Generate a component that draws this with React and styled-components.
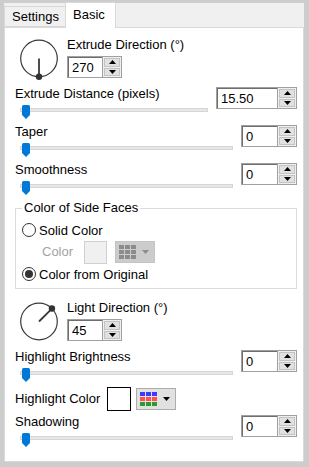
import React from 'react'
import styled, { createGlobalStyle } from 'styled-components'

const GlobalStyle = createGlobalStyle`
  html, body {
    margin: 0;
    padding: 0;
    background: #cdcdcd;
  }
`

const Window = styled.div`
  width: 309px;
  height: 467px;
  box-sizing: border-box;
  padding: 3px 5px 5px 4px;
  background: #cdcdcd;
  display: flex;
  flex-direction: column;
  font-family: "Liberation Sans", Arial, sans-serif;
  font-size: 13px;
  color: #000;
`

const TabStrip = styled.div`
  height: 24px;
  flex: none;
  background: #f0f0f0;
  display: flex;
  align-items: flex-end;
`

const Tab = styled.div`
  box-sizing: border-box;
  width: ${p => p.$w}px;
  height: ${p => (p.$active ? 26 : 21)}px;
  padding-left: ${p => p.$pl}px;
  margin-left: ${p => (p.$active ? -1 : 0)}px;
  margin-bottom: ${p => (p.$active ? -1 : 0)}px;
  position: relative;
  z-index: ${p => (p.$active ? 1 : 0)};
  background: ${p => (p.$active ? '#fff' : '#f0f0f0')};
  border: 1px solid #d9d9d9;
  border-bottom: ${p => (p.$active ? 'none' : '1px solid #d9d9d9')};
  display: flex;
  align-items: center;
  padding-bottom: ${p => (p.$active ? 3 : 0)}px;
`

const Panel = styled.div`
  flex: 1;
  background: #fff;
  border: 1px solid #d9d9d9;
  padding: 9px 6px 0 10px;
  display: flex;
  flex-direction: column;
`

const DirRow = styled.div`
  display: flex;
  align-items: flex-start;
  gap: 8px;
  margin-top: ${p => p.$mt || 0}px;
`

const DialSvg = styled.svg`
  margin: 2px 0 0 4px;
  overflow: visible;
  flex: none;
`

const DirCol = styled.div`
  display: flex;
  flex-direction: column;
  gap: 3px;
`

const Label = styled.div`
  line-height: 16px;
  white-space: nowrap;
  color: ${p => (p.$disabled ? '#a3a3a3' : '#000')};
`

const Group = styled.div`
  display: grid;
  grid-template-columns: 1fr auto;
  column-gap: 8px;
  margin-top: ${p => p.$mt}px;
`

const GroupSpin = styled.div`
  grid-column: 2;
  grid-row: 1 / span 2;
  margin-top: 1px;
`

const SliderRow = styled.div`
  grid-column: 1;
  position: relative;
  height: 14px;
  margin: 3px 0 0 5px;
`

const Track = styled.div`
  position: absolute;
  left: 0;
  right: 0;
  top: 3px;
  height: 4px;
  box-sizing: border-box;
  background: #e7e7e7;
  border: 1px solid #d6d6d6;
`

const Thumb = styled.svg`
  position: absolute;
  left: 2px;
  top: 0;
`

const SpinWrap = styled.div`
  display: flex;
  width: ${p => p.$w}px;
  height: 22px;
  box-sizing: border-box;
  border: 1px solid #a0a0a0;
  background: #fff;
`

const SpinInput = styled.input`
  flex: 1;
  min-width: 0;
  box-sizing: border-box;
  margin: 0;
  border: none;
  border-top: 1px solid #6e6e6e;
  border-left: 1px solid #6e6e6e;
  padding: 0 0 0 3px;
  font-family: "Liberation Sans", Arial, sans-serif;
  font-size: 13px;
  color: #000;
  background: #fff;
  outline: none;
`

const SpinButtons = styled.div`
  width: 19px;
  display: flex;
  flex-direction: column;
  gap: 1px;
  padding: 1px;
  box-sizing: border-box;
  background: #f0f0f0;
  border-left: 1px solid #a0a0a0;
`

const SpinArrow = styled.div`
  flex: 1;
  background: #e1e1e1;
  border: 1px solid #c3c3c3;
  display: flex;
  align-items: center;
  justify-content: center;
`

const Fieldset = styled.fieldset`
  margin: 5px 0 0 0;
  padding: 3px 0 3px 6px;
  border: 1px solid #dcdcdc;
  min-width: 0;
`

const Legend = styled.legend`
  padding: 0 2px;
  line-height: 16px;
`

const OptionRow = styled.div`
  height: 22px;
  display: flex;
  align-items: center;
  gap: ${p => p.$gap || 3}px;
  padding-left: ${p => p.$pl || 0}px;
`

const Radio = styled.span`
  width: 14px;
  height: 14px;
  box-sizing: border-box;
  border-radius: 50%;
  border: 1px solid #333;
  background: #fff;
  display: flex;
  align-items: center;
  justify-content: center;
  &::after {
    content: '';
    display: ${p => (p.$checked ? 'block' : 'none')};
    width: 8px;
    height: 8px;
    border-radius: 50%;
    background: #333;
  }
`

const Swatch = styled.div`
  width: ${p => p.$size}px;
  height: ${p => p.$size}px;
  box-sizing: border-box;
  border: 1px solid ${p => (p.$disabled ? '#cfcfcf' : '#000')};
  background: ${p => (p.$disabled ? '#f0f0f0' : '#fff')};
  margin-left: ${p => p.$ml}px;
`

const PaletteButton = styled.div`
  width: 40px;
  height: 22px;
  box-sizing: border-box;
  margin-left: 5px;
  background: ${p => (p.$disabled ? '#cccccc' : '#e1e1e1')};
  border: 1px solid ${p => (p.$disabled ? '#c4c4c4' : '#adadad')};
  display: flex;
  align-items: center;
  padding-left: 3px;
  gap: 6px;
`

const ColorRow = styled.div`
  height: 24px;
  display: flex;
  align-items: center;
  margin-top: ${p => p.$mt}px;
`

const Dial = ({ angle }) => {
  const rad = (angle * Math.PI) / 180
  const cx = 20
  const cy = 19.5
  const r = 18.3
  const x = cx + r * Math.cos(rad)
  const y = cy - r * Math.sin(rad)
  return (
    <DialSvg width="40" height="39" viewBox="0 0 40 39">
      <circle cx={cx} cy={cy} r={r} fill="none" stroke="#3a3a3a" strokeWidth="1.2" />
      <line x1={cx} y1={cy} x2={x} y2={y} stroke="#3a3a3a" strokeWidth="1.8" />
      <circle cx={x} cy={y} r="3.2" fill="#333" />
    </DialSvg>
  )
}

const Triangle = ({ up, color = '#000' }) => (
  <svg width="7" height="4" viewBox="0 0 7 4">
    <path d={up ? 'M0 4 L3.5 0 L7 4 Z' : 'M0 0 L7 0 L3.5 4 Z'} fill={color} />
  </svg>
)

const SpinBox = ({ value, width }) => (
  <SpinWrap $w={width}>
    <SpinInput defaultValue={value} readOnly />
    <SpinButtons>
      <SpinArrow><Triangle up /></SpinArrow>
      <SpinArrow><Triangle /></SpinArrow>
    </SpinButtons>
  </SpinWrap>
)

const Slider = () => (
  <SliderRow>
    <Track />
    <Thumb width="8" height="14" viewBox="0 0 8 14">
      <path d="M0 1.5 Q0 0 1.5 0 H6.5 Q8 0 8 1.5 V10 L4 14 L0 10 Z" fill="#0078d7" />
    </Thumb>
  </SliderRow>
)

const SliderGroup = ({ label, value, spinWidth = 56, mt }) => (
  <Group $mt={mt}>
    <Label>{label}</Label>
    <GroupSpin>
      <SpinBox value={value} width={spinWidth} />
    </GroupSpin>
    <Slider />
  </Group>
)

const gridRows = ['#3b3bff', '#ff4f4f', '#2e9a2e']

const PaletteGrid = ({ disabled }) => (
  <svg width="17" height="14" viewBox="0 0 17 14">
    {gridRows.map((c, row) =>
      [0, 1, 2].map(col => (
        <rect
          key={`${row}-${col}`}
          x={col * 6}
          y={row * 5}
          width="5"
          height="4"
          fill={disabled ? '#8c8c8c' : c}
        />
      ))
    )}
  </svg>
)

const Palette = ({ disabled }) => (
  <PaletteButton $disabled={disabled}>
    <PaletteGrid disabled={disabled} />
    <Triangle color={disabled ? '#8c8c8c' : '#000'} />
  </PaletteButton>
)

export default function App() {
  return (
    <>
      <GlobalStyle />
      <Window>
        <TabStrip>
          <Tab $w={62} $pl={7}>Settings</Tab>
          <Tab $w={51} $pl={7} $active>Basic</Tab>
        </TabStrip>
        <Panel>
          <DirRow>
            <Dial angle={270} />
            <DirCol>
              <Label>Extrude Direction (°)</Label>
              <SpinBox value="270" width={55} />
            </DirCol>
          </DirRow>

          <SliderGroup label="Extrude Distance (pixels)" value="15.50" spinWidth={81} mt={8} />
          <SliderGroup label="Taper" value="0" mt={5} />
          <SliderGroup label="Smoothness" value="0" mt={5} />

          <Fieldset>
            <Legend>Color of Side Faces</Legend>
            <OptionRow>
              <Radio />
              <span>Solid Color</span>
            </OptionRow>
            <OptionRow $pl={20} $gap={0}>
              <Label $disabled>Color</Label>
              <Swatch $size={23} $ml={8} $disabled />
              <Palette disabled />
            </OptionRow>
            <OptionRow>
              <Radio $checked />
              <span>Color from Original</span>
            </OptionRow>
          </Fieldset>

          <DirRow $mt={11}>
            <Dial angle={45} />
            <DirCol>
              <Label>Light Direction (°)</Label>
              <SpinBox value="45" width={55} />
            </DirCol>
          </DirRow>

          <SliderGroup label="Highlight Brightness" value="0" mt={8} />

          <ColorRow $mt={5}>
            <Label>Highlight Color</Label>
            <Swatch $size={24} $ml={7} />
            <Palette />
          </ColorRow>

          <SliderGroup label="Shadowing" value="0" mt={3} />
        </Panel>
      </Window>
    </>
  )
}
